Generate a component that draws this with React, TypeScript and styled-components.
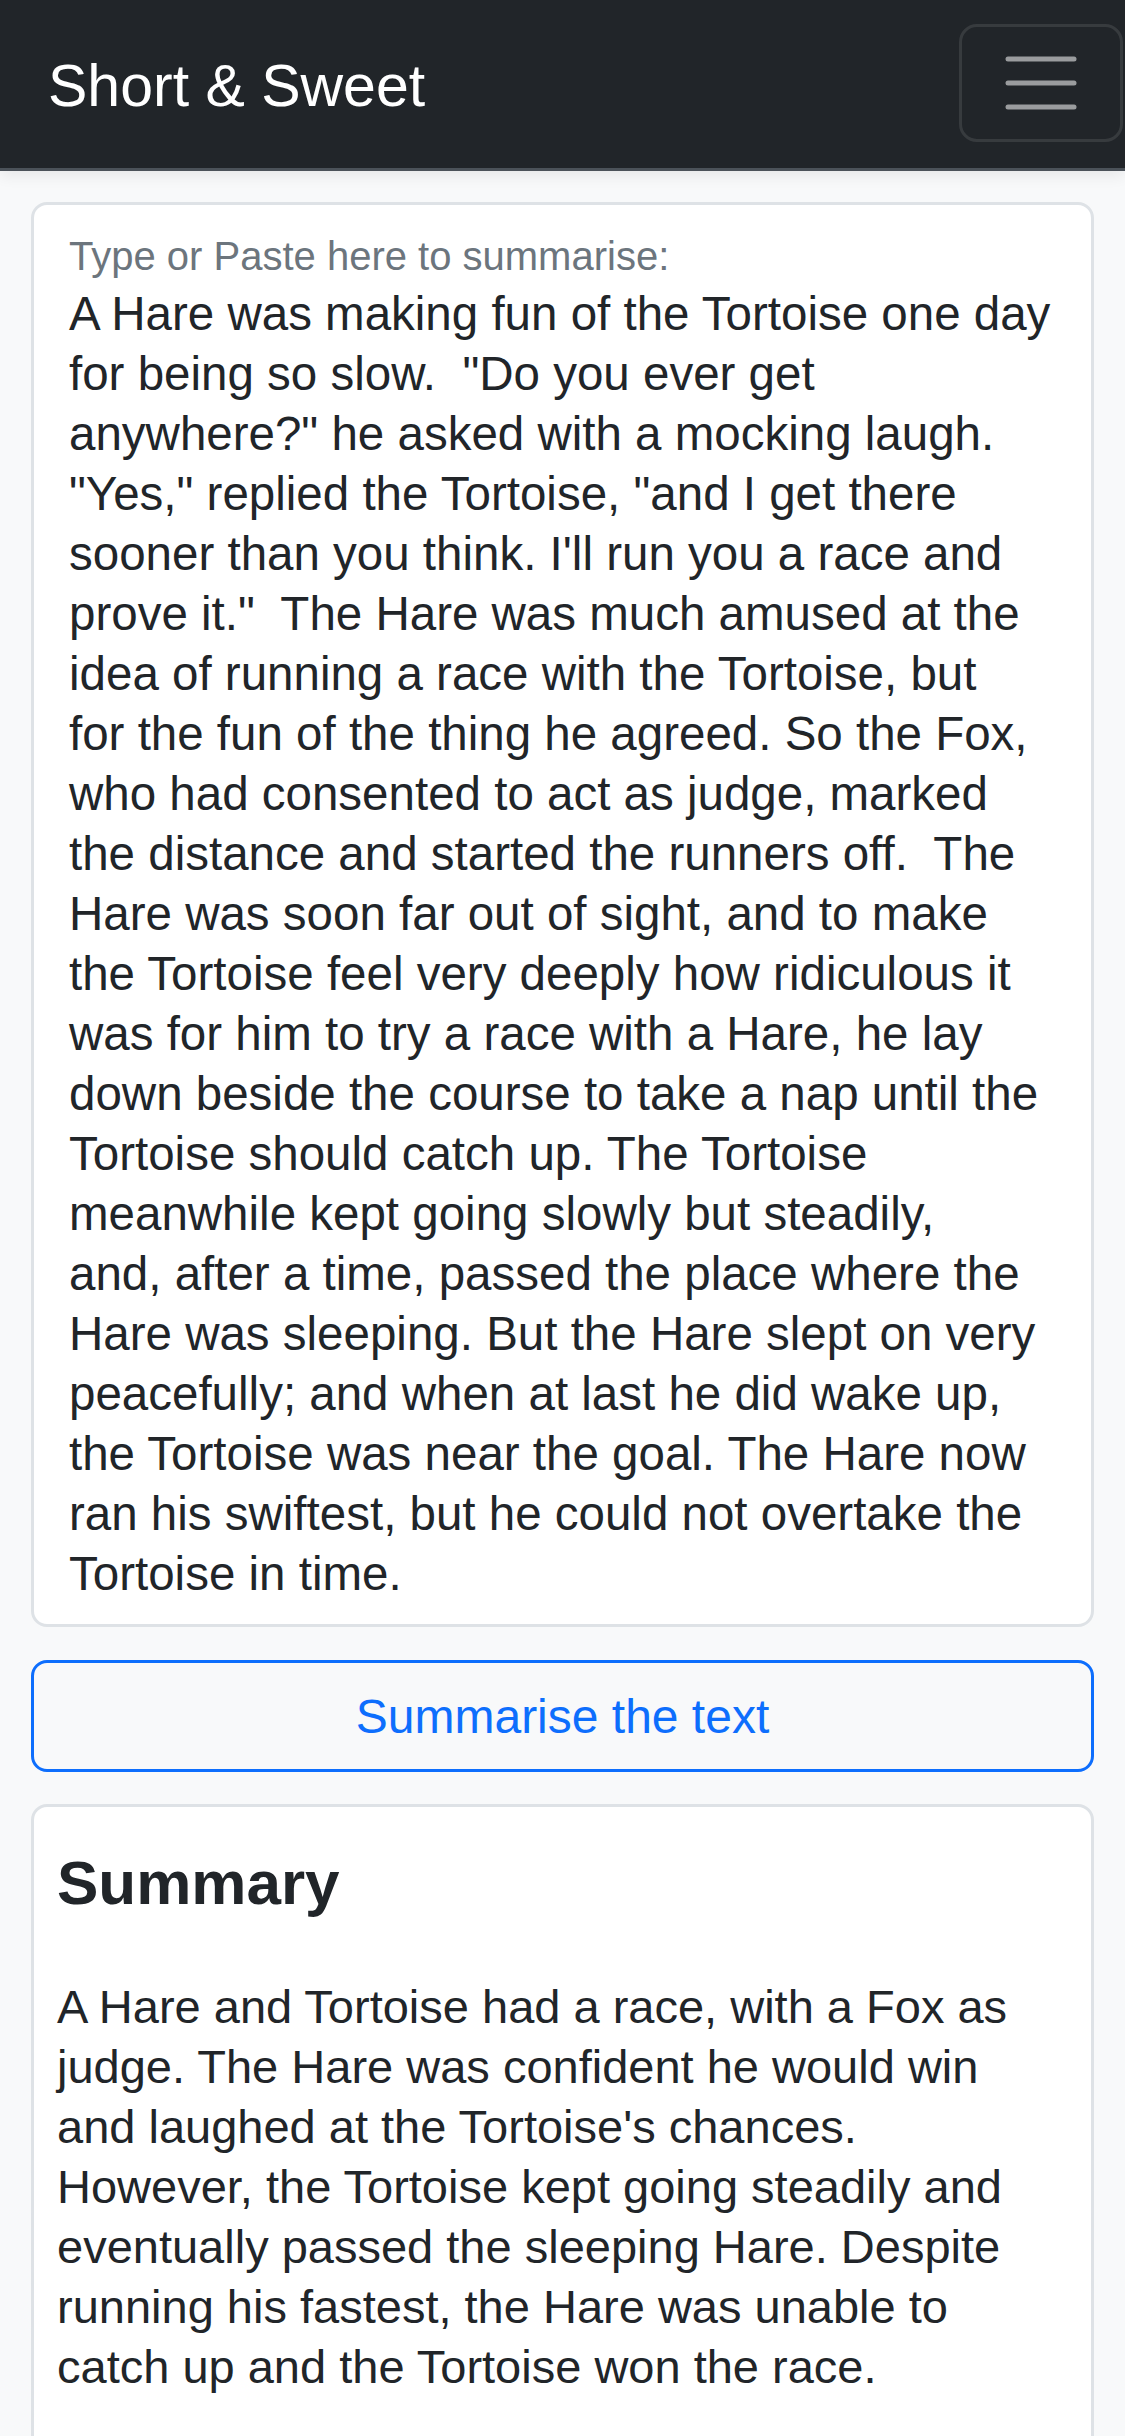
import React from "react"
import styled, { createGlobalStyle } from "styled-components"

const GlobalStyle = createGlobalStyle`
	* {
		box-sizing: border-box;
	}

	body {
		margin: 0;
		background: #f8f9fa;
		color: #212529;
		font-family: "Liberation Sans", Arial, sans-serif;
	}
`

const Navbar = styled.header`
	display: flex;
	align-items: center;
	justify-content: space-between;
	height: 171px;
	padding: 0 2px 3px 48px;
	background: #212529;
	border-bottom: 3px solid #4b5259;
	box-shadow: 0 5px 14px rgba(0, 0, 0, 0.07);
`

const Brand = styled.a`
	margin-top: 6px;
	font-size: 59px;
	line-height: 72px;
	color: #fff;
	text-decoration: none;
`

const Toggler = styled.button`
	display: flex;
	align-items: center;
	justify-content: center;
	width: 164px;
	height: 118px;
	padding: 0;
	background: transparent;
	border: 3px solid rgba(255, 255, 255, 0.1);
	border-radius: 18px;
`

const Main = styled.main`
	padding: 31px 31px 0;
`

const Card = styled.section`
	background: #fff;
	border: 3px solid #dee2e6;
	border-radius: 16px;
`

const InputCard = styled(Card)`
	padding: 27px 34px 20px 35px;
`

const FieldLabel = styled.label`
	display: block;
	font-size: 40px;
	line-height: 48px;
	color: #6c757d;
`

const FieldText = styled.div`
	margin-top: 4px;
	font-size: 47.5px;
	line-height: 60px;
	outline: none;
`

const Line = styled.div`
	white-space: pre;
`

const SummariseButton = styled.button`
	display: block;
	width: 100%;
	height: 112px;
	margin-top: 33px;
	padding: 2px 0 0;
	background: transparent;
	border: 3px solid #0d6efd;
	border-radius: 16px;
	color: #0d6efd;
	font-family: inherit;
	font-size: 48px;
	line-height: 60px;
`

const SummaryCard = styled(Card)`
	margin-top: 32px;
	padding: 37px 24px 90px 23px;
	border-bottom-left-radius: 0;
	border-bottom-right-radius: 0;
`

const SummaryTitle = styled.h2`
	margin: 0 0 56px;
	font-size: 62px;
	font-weight: 700;
	line-height: 77px;
`

const SummaryText = styled.div`
	font-size: 47px;
	line-height: 60px;
`

const sourceLines = [
	"A Hare was making fun of the Tortoise one day",
	"for being so slow.  \"Do you ever get",
	"anywhere?\" he asked with a mocking laugh.",
	"\"Yes,\" replied the Tortoise, \"and I get there",
	"sooner than you think. I'll run you a race and",
	"prove it.\"  The Hare was much amused at the",
	"idea of running a race with the Tortoise, but",
	"for the fun of the thing he agreed. So the Fox,",
	"who had consented to act as judge, marked",
	"the distance and started the runners off.  The",
	"Hare was soon far out of sight, and to make",
	"the Tortoise feel very deeply how ridiculous it",
	"was for him to try a race with a Hare, he lay",
	"down beside the course to take a nap until the",
	"Tortoise should catch up. The Tortoise",
	"meanwhile kept going slowly but steadily,",
	"and, after a time, passed the place where the",
	"Hare was sleeping. But the Hare slept on very",
	"peacefully; and when at last he did wake up,",
	"the Tortoise was near the goal. The Hare now",
	"ran his swiftest, but he could not overtake the",
	"Tortoise in time.",
]

const summaryLines = [
	"A Hare and Tortoise had a race, with a Fox as",
	"judge. The Hare was confident he would win",
	"and laughed at the Tortoise's chances.",
	"However, the Tortoise kept going steadily and",
	"eventually passed the sleeping Hare. Despite",
	"running his fastest, the Hare was unable to",
	"catch up and the Tortoise won the race.",
]

const MenuIcon = () => (
	<svg width="72" height="54" viewBox="0 0 72 54" fill="none">
		<g stroke="rgba(255,255,255,0.55)" strokeWidth="5" strokeLinecap="round">
			<line x1="3" y1="3" x2="69" y2="3" />
			<line x1="3" y1="27" x2="69" y2="27" />
			<line x1="3" y1="51" x2="69" y2="51" />
		</g>
	</svg>
)

export default function App() {
	return (
		<>
			<GlobalStyle />
			<Navbar>
				<Brand href="#">Short &amp; Sweet</Brand>
				<Toggler aria-label="Toggle navigation">
					<MenuIcon />
				</Toggler>
			</Navbar>
			<Main>
				<InputCard>
					<FieldLabel htmlFor="source">Type or Paste here to summarise:</FieldLabel>
					<FieldText id="source" role="textbox" aria-multiline="true">
						{sourceLines.map((line, i) => (
							<Line key={`src-${i}`}>{line}</Line>
						))}
					</FieldText>
				</InputCard>
				<SummariseButton>Summarise the text</SummariseButton>
				<SummaryCard>
					<SummaryTitle>Summary</SummaryTitle>
					<SummaryText>
						{summaryLines.map((line, i) => (
							<Line key={`sum-${i}`}>{line}</Line>
						))}
					</SummaryText>
				</SummaryCard>
			</Main>
		</>
	)
}
